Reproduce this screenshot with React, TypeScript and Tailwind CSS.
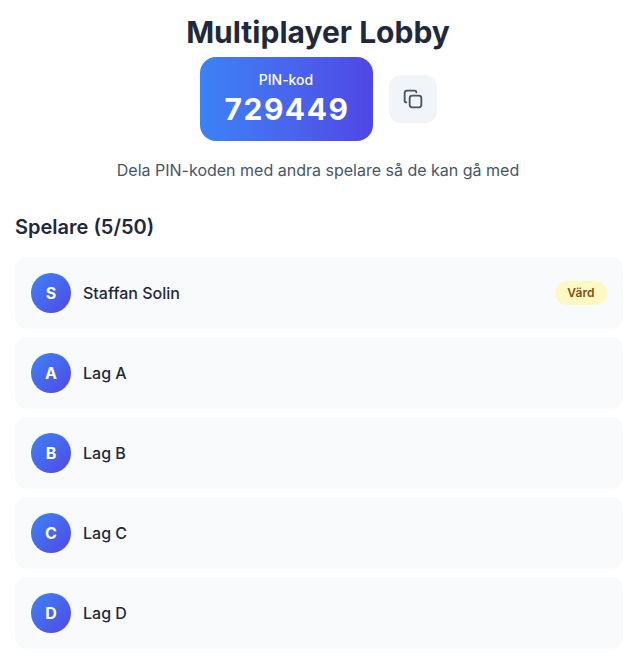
const players = [
  { name: 'Staffan Solin', letter: 'S', host: true },
  { name: 'Lag A', letter: 'A', host: false },
  { name: 'Lag B', letter: 'B', host: false },
  { name: 'Lag C', letter: 'C', host: false },
  { name: 'Lag D', letter: 'D', host: false },
];

function CopyIcon() {
  return (
    <svg width="20" height="20" viewBox="0 0 24 24" fill="none" stroke="#475569" strokeWidth="2.2" strokeLinecap="round" strokeLinejoin="round">
      <rect x="8" y="8" width="14" height="14" rx="3" />
      <path d="M4 16c-1.1 0-2-.9-2-2V5c0-1.7 1.3-3 3-3h9c1.1 0 2 .9 2 2" />
    </svg>
  );
}

export default function App() {
  return (
    <div className="min-h-screen bg-white px-[15px] pt-[11px] font-['Inter',sans-serif] text-[#1e293b]">
      <h1 className="text-center text-[30px] leading-[42px] font-bold">Multiplayer Lobby</h1>

      <div className="mt-1 flex items-center justify-center gap-4">
        <div className="flex h-[84px] w-[173px] flex-col items-center rounded-2xl bg-gradient-to-r from-[#3b82f6] to-[#4f46e5] pt-3.5 text-white">
          <span className="text-sm leading-[17px] font-medium">PIN-kod</span>
          <span className="mt-0.5 ml-[2px] text-[30px] leading-[39px] font-bold tracking-[1.5px]">729449</span>
        </div>
        <button className="flex h-12 w-12 items-center justify-center rounded-xl bg-[#f1f5f9]">
          <CopyIcon />
        </button>
      </div>

      <p className="mt-5 text-center text-base leading-[19px] text-[#475569]">
        Dela PIN-koden med andra spelare så de kan gå med
      </p>

      <h2 className="mt-[35px] text-xl leading-6 font-semibold">Spelare (5/50)</h2>

      <ul className="mt-[18px] flex w-[608px] flex-col gap-2">
        {players.map((p) => (
          <li key={p.name} className="flex h-[72px] items-center gap-3 rounded-xl bg-[#f8fafc] px-4">
            <div className="flex h-10 w-10 items-center justify-center rounded-full bg-gradient-to-br from-[#3b82f6] to-[#4f46e5] font-bold text-white">
              {p.letter}
            </div>
            <span className="flex-1 text-base font-medium">{p.name}</span>
            {p.host && (
              <span className="rounded-full bg-[#fef9c3] px-[12.5px] py-1 text-xs font-semibold text-[#854d0e]">Värd</span>
            )}
          </li>
        ))}
      </ul>
    </div>
  );
}
